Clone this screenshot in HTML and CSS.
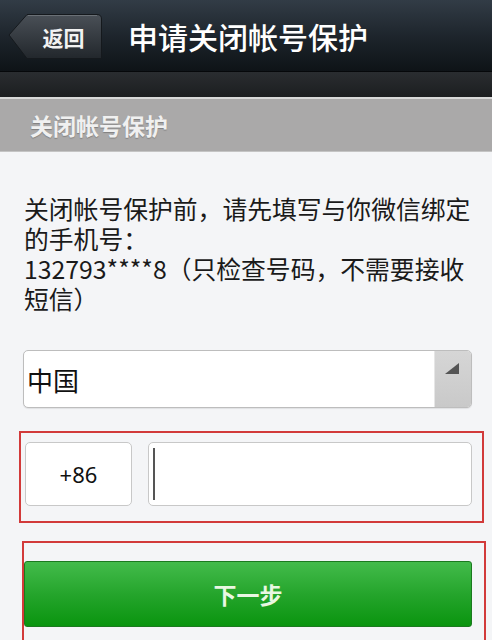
FILE: index.html
```html
<!DOCTYPE html>
<html lang="zh">
<head>
<meta charset="utf-8">
<title>申请关闭帐号保护</title>
<link rel="stylesheet" href="styles.css">
</head>
<body>
<div class="page">
  <header class="topbar">
    <a class="back" href="#">
      <svg class="back-shape" width="95" height="47" viewBox="0 0 95 47">
        <defs>
          <linearGradient id="bg" x1="0" y1="0" x2="0" y2="1">
            <stop offset="0" stop-color="#4a5057"/>
            <stop offset="1" stop-color="#22272c"/>
          </linearGradient>
        </defs>
        <path d="M1 22 L19 1.5 H89 Q93.5 1.5 93.5 6 V45.5 H19 Z" fill="url(#bg)" stroke="#15191d" stroke-width="1"/>
        <path d="M20 2.5 H89" stroke="#6a7076" stroke-width="1"/>
      </svg>
      <span class="back-label">返回</span>
    </a>
    <h1 class="title">申请关闭帐号保护</h1>
  </header>
  <div class="band"></div>
  <div class="section-title">关闭帐号保护</div>
  <main class="content">
    <p class="intro">关闭帐号保护前，请先填写与你微信绑定的手机号：<br>132793****8（只检查号码，不需要接收短信）</p>
    <div class="select">
      <span class="select-value">中国</span>
      <span class="select-arrow"><span class="tri"></span></span>
    </div>
    <div class="phone-row highlight">
      <div class="code">+86</div>
      <div class="phone-input"><span class="caret"></span></div>
    </div>
    <div class="next-wrap highlight">
      <button class="next" type="button">下一步</button>
    </div>
  </main>
</div>
</body>
</html>
```
FILE: styles.css
```css
html, body {
  margin: 0;
  padding: 0;
}
body {
  width: 492px;
  height: 640px;
  overflow: hidden;
  background: #f4f5f7;
  font-family: "Noto Sans CJK SC", "Noto Sans", sans-serif;
}
.page {
  display: flex;
  flex-direction: column;
}
.topbar {
  height: 72px;
  display: flex;
  align-items: center;
  background: linear-gradient(#323c46 0%, #1c232a 55%, #0e1317 100%);
  border-bottom: 1px solid #06080a;
  box-sizing: border-box;
}
.back {
  position: relative;
  width: 95px;
  height: 47px;
  margin-left: 8px;
  margin-top: 2px;
  display: flex;
  align-items: center;
  justify-content: center;
  text-decoration: none;
}
.back-shape {
  position: absolute;
  left: 0;
  top: 0;
}
.back-label {
  position: relative;
  color: #f2f2f2;
  font-size: 21px;
  font-weight: 700;
  padding-left: 16px;
  letter-spacing: 0;
}
.title {
  margin: 0 0 0 25px;
  color: #ffffff;
  font-size: 30px;
  font-weight: 500;
  letter-spacing: 0;
  line-height: 1;
}
.band {
  height: 25px;
  background: linear-gradient(#2a2d30, #1c1e20);
  border-bottom: 2px solid #d8d8d8;
}
.section-title {
  height: 52px;
  background: #aaa9a9;
  color: #f0f0f0;
  font-size: 23px;
  font-weight: 700;
  display: flex;
  align-items: center;
  padding-left: 30px;
  text-shadow: 0 1px 1px rgba(0,0,0,0.25);
  border-bottom: 1px solid #c4c4c4;
}
.content {
  display: flex;
  flex-direction: column;
}
.intro {
  margin: 41px 0 0 24px;
  width: 460px;
  font-size: 24.8px;
  line-height: 30px;
  color: #1a1a1a;
}
.select {
  margin: 37px 0 0 23px;
  width: 449px;
  height: 58px;
  box-sizing: border-box;
  border: 1px solid #bdbdbd;
  border-radius: 5px;
  background: #fff;
  display: flex;
  overflow: hidden;
  box-shadow: 0 1px 1px rgba(0,0,0,0.08);
}
.select-value {
  flex: 1;
  display: flex;
  align-items: center;
  padding-left: 3px;
  font-size: 26px;
  color: #111;
}
.select-arrow {
  width: 36px;
  background: linear-gradient(#d6d6d6, #c9c9c9);
  border-left: 1px solid #e6e6e6;
  position: relative;
}
.tri {
  position: absolute;
  left: 10px;
  top: 12px;
  width: 0;
  height: 0;
  border-style: solid;
  border-width: 0 0 11px 14px;
  border-color: transparent transparent #555 transparent;
}
.highlight {
  border: 2px solid #d23a3a;
  box-sizing: border-box;
}
.phone-row {
  margin: 23px 0 0 19px;
  width: 465px;
  height: 92px;
  display: flex;
  gap: 16px;
  padding: 9px 10px 0 4px;
}
.code {
  width: 107px;
  height: 64px;
  box-sizing: border-box;
  border: 1px solid #c8c8c8;
  border-radius: 5px;
  background: #fff;
  display: flex;
  align-items: center;
  justify-content: center;
  font-size: 22px;
  color: #111;
  font-family: "Noto Sans", sans-serif;
}
.phone-input {
  flex: 1;
  height: 64px;
  box-sizing: border-box;
  border: 1px solid #c8c8c8;
  border-radius: 5px;
  background: #fff;
  display: flex;
  align-items: center;
  padding-left: 4px;
}
.caret {
  width: 2px;
  height: 52px;
  background: #555;
}
.next-wrap {
  margin: 18px 0 0 22px;
  width: 464px;
  height: 110px;
  padding: 18px 12px 0 0;
}
.next {
  width: 100%;
  height: 66px;
  border: 1px solid #1b7a1f;
  border-radius: 3px;
  background: linear-gradient(#43bb4b 0%, #25a52c 50%, #0a950f 100%);
  color: #e9f7e3;
  font-size: 23px;
  font-weight: 700;
  font-family: "Noto Sans CJK SC", sans-serif;
  display: block;
  padding: 0;
}
```
